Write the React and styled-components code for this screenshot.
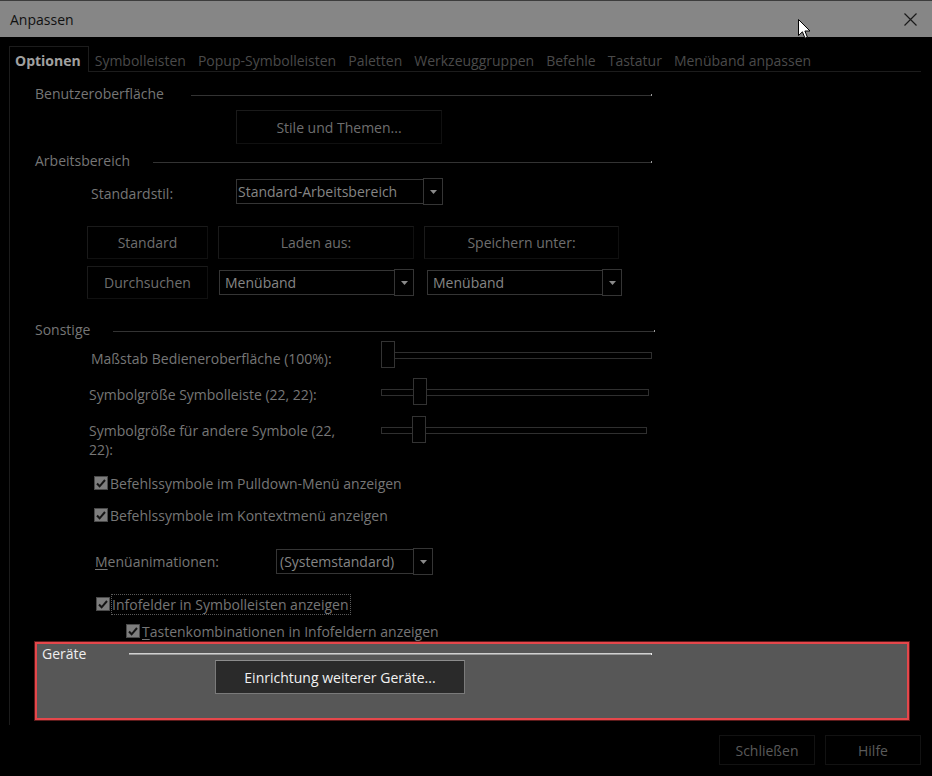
import React from "react";
import styled, { createGlobalStyle } from "styled-components";

const Global = createGlobalStyle`
  html, body { margin: 0; padding: 0; background: #000; }
  * { box-sizing: border-box; }
`;

const Window = styled.div`
  position: relative;
  width: 932px;
  height: 776px;
  overflow: hidden;
  background: #000;
  display: flex;
  flex-direction: column;
  font-family: "Open Sans", "Noto Sans", sans-serif;
  font-size: 14px;
  color: #767676;
`;

const TitleBar = styled.div`
  height: 37px;
  flex: none;
  border-top: 1px solid #3c3c3c;
  background: #868686;
  display: flex;
  align-items: center;
  justify-content: space-between;
  padding: 0 15px 0 10px;
`;

const Title = styled.div`
  color: #111;
  font-size: 14px;
`;

const CloseIcon = styled.svg`
  width: 13px;
  height: 13px;
  display: block;
`;

const Main = styled.div`
  flex: 1;
  display: flex;
  flex-direction: column;
  padding: 9px 11px 0 9px;
`;

const TabStrip = styled.div`
  display: flex;
  align-items: flex-end;
  height: 25px;
`;

const Tab = styled.div`
  height: ${(p) => (p.$active ? "26px" : "25px")};
  display: flex;
  align-items: center;
  padding: ${(p) => (p.$active ? "2px 7px 0 5px" : "3px 6px 0")};
  border: ${(p) => (p.$active ? "1px solid #1c1c1c" : "none")};
  border-bottom: none;
  margin-bottom: ${(p) => (p.$active ? "-1px" : "0")};
  background: #000;
  position: relative;
  z-index: ${(p) => (p.$active ? 1 : 0)};
  font-weight: ${(p) => (p.$active ? 700 : 400)};
  color: ${(p) => (p.$active ? "#a0a0a0" : "#4a4a4a")};
  white-space: nowrap;
`;

const Panel = styled.div`
  border-left: 1px solid #1c1c1c;
  border-top: 1px solid #1c1c1c;
  padding: 12px 12px 5px 25px;
  display: flex;
  flex-direction: column;
  align-items: flex-start;
`;

const SectionHead = styled.div`
  display: grid;
  grid-template-columns: ${(p) => p.$label}px ${(p) => p.$line}px;
  align-items: center;
  height: ${(p) => (p.$compact ? "13px" : "20px")};
  line-height: ${(p) => (p.$compact ? "13px" : "20px")};
  margin-top: ${(p) => p.$top || 0}px;
  color: ${(p) => (p.$bright ? "#efefef" : "#767676")};
  white-space: nowrap;
`;

const Rule = styled.div`
  position: relative;
  height: ${(p) => (p.$bright ? "2px" : "1px")};
  margin-top: ${(p) => (p.$bright ? "1px" : "3px")};
  background: ${(p) => (p.$bright ? "#9a9a9a" : "#333")};
  border-top: ${(p) => (p.$bright ? "1px solid #d0d0d0" : "none")};
  &::after {
    content: "";
    position: absolute;
    right: 0;
    bottom: 0;
    width: 1px;
    height: 2px;
    background: ${(p) => (p.$bright ? "#eee" : "#9a9a9a")};
  }
`;

const DarkButton = styled.div`
  width: ${(p) => p.$w}px;
  height: ${(p) => p.$h}px;
  margin: ${(p) => p.$top || 0}px 0 0 ${(p) => p.$left || 0}px;
  border: 1px solid #101010;
  border-top-color: #1a1a1a;
  border-left-color: #1a1a1a;
  display: flex;
  align-items: center;
  justify-content: center;
  color: #6e6e6e;
  white-space: nowrap;
`;

const FieldRow = styled.div`
  display: grid;
  grid-template-columns: ${(p) => p.$label}px ${(p) => p.$field}px;
  align-items: center;
  margin: ${(p) => p.$top}px 0 0 ${(p) => p.$left}px;
`;

const FieldLabel = styled.div`
  padding-top: ${(p) => p.$drop || 0}px;
  color: #767676;
  white-space: nowrap;
`;

const Key = styled.span`
  text-decoration: underline;
  text-underline-offset: 2px;
`;

const Combo = styled.div`
  display: flex;
  height: 27px;
  align-items: stretch;
  margin-left: ${(p) => p.$shift || 0}px;
`;

const ComboText = styled.div`
  flex: 1;
  margin: 1px 0;
  border: 1px solid #353535;
  border-right: none;
  padding-left: ${(p) => p.$pad || 1}px;
  display: flex;
  align-items: center;
  color: #858585;
  white-space: nowrap;
  overflow: hidden;
`;

const ComboButton = styled.div`
  width: 20px;
  border: 1px solid #353535;
  display: flex;
  align-items: center;
  justify-content: center;
`;

const Caret = styled.svg`
  width: 7px;
  height: 4px;
  display: block;
`;

const ButtonGrid = styled.div`
  display: grid;
  grid-template-columns: 121px 196px 197px;
  grid-auto-rows: 33px;
  column-gap: 10px;
  row-gap: 7px;
  align-items: center;
  margin: 21px 0 0 52px;
`;

const SliderRow = styled.div`
  display: grid;
  grid-template-columns: ${(p) => p.$label}px auto;
  align-items: start;
  margin: ${(p) => p.$top}px 0 0 ${(p) => p.$left}px;
`;

const SliderLabel = styled.div`
  width: 262px;
  padding-top: ${(p) => p.$drop}px;
  line-height: 19px;
  color: #767676;
`;

const SliderTrack = styled.div`
  position: relative;
  width: ${(p) => p.$w}px;
  height: 27px;
  &::before {
    content: "";
    position: absolute;
    left: 0;
    right: 0;
    top: 11px;
    height: 5px;
    border: 1px solid #2f2f2f;
  }
`;

const SliderThumb = styled.div`
  position: absolute;
  top: 0;
  width: 14px;
  height: 27px;
  border: 1px solid #333;
  background: #000;
`;

const CheckRow = styled.div`
  display: flex;
  align-items: center;
  height: 20px;
  gap: 1px;
  margin: ${(p) => p.$top}px 0 0 ${(p) => p.$left}px;
  color: #767676;
  white-space: nowrap;
`;

const Box = styled.div`
  width: 14px;
  height: 14px;
  flex: none;
  background: #7e7e7e;
  border: 1px solid #4a4a4a;
  display: flex;
  align-items: center;
  justify-content: center;
`;

const CheckText = styled.div`
  height: 21px;
  display: flex;
  align-items: center;
  padding: 0 1px 0 0;
  border: 1px dotted ${(p) => (p.$focus ? "#5a5a5a" : "transparent")};
`;

const Highlight = styled.div`
  width: 874px;
  height: 78px;
  margin-top: 1px;
  border: 2px solid #e5474b;
  box-shadow: 0 0 0 1px #5a1a1a;
  background: #575757;
  padding: 3px 0 0 5px;
  display: flex;
  flex-direction: column;
  align-items: flex-start;
`;

const LightButton = styled.div`
  width: 250px;
  height: 34px;
  margin: 0 0 0 173px;
  background: #2a2a2a;
  border: 1px solid #7a7a7a;
  border-top-color: #8c8c8c;
  display: flex;
  align-items: center;
  justify-content: center;
  color: #f2f2f2;
  white-space: nowrap;
`;

const Footer = styled.div`
  display: flex;
  justify-content: flex-end;
  gap: 10px;
  margin-top: 10px;
`;

const FooterButton = styled.div`
  width: 96px;
  height: 30px;
  border: 1px solid #121212;
  display: flex;
  align-items: center;
  justify-content: center;
  color: #5a5a5a;
`;

const Pointer = styled.svg`
  position: absolute;
  left: 798px;
  top: 19px;
  width: 13px;
  height: 21px;
`;

const tabs = [
  "Symbolleisten",
  "Popup-Symbolleisten",
  "Paletten",
  "Werkzeuggruppen",
  "Befehle",
  "Tastatur",
  "Menüband anpassen",
];

const sliders = [
  { label: "Maßstab Bedieneroberfläche (100%):", width: 271, thumb: 0, top: 1, left: 56, drop: 8 },
  { label: "Symbolgröße Symbolleiste (22, 22):", width: 268, thumb: 32, top: 10, left: 54, drop: 7 },
  { label: "Symbolgröße für andere Symbole (22, 22):", width: 266, thumb: 31, top: 11, left: 54, drop: 5 },
];

function DropCaret() {
  return (
    <Caret viewBox="0 0 7 4">
      <path d="M0 0h7L3.5 4z" fill="#8a8a8a" />
    </Caret>
  );
}

function ComboBox({ text, width, shift, pad }) {
  return (
    <Combo style={{ width }} $shift={shift}>
      <ComboText $pad={pad}>{text}</ComboText>
      <ComboButton>
        <DropCaret />
      </ComboButton>
    </Combo>
  );
}

function Check({ children, top, left, focus }) {
  return (
    <CheckRow $top={top} $left={left}>
      <Box>
        <svg width="10" height="9" viewBox="0 0 10 9">
          <path d="M1 4.5l2.6 2.8L9 1" fill="none" stroke="#151515" strokeWidth="2" />
        </svg>
      </Box>
      <CheckText $focus={focus}>{children}</CheckText>
    </CheckRow>
  );
}

export default function App() {
  return (
    <Window>
      <Global />
      <TitleBar>
        <Title>Anpassen</Title>
        <CloseIcon viewBox="0 0 13 13">
          <path d="M0.5 0.5l12 12M12.5 0.5l-12 12" stroke="#1a1a1a" strokeWidth="1.2" />
        </CloseIcon>
      </TitleBar>

      <Main>
        <TabStrip>
          <Tab $active>Optionen</Tab>
          {tabs.map((t) => (
            <Tab key={t}>{t}</Tab>
          ))}
        </TabStrip>

        <Panel>
          <SectionHead $label={156} $line={461}>
            <span>Benutzeroberfläche</span>
            <Rule />
          </SectionHead>
          <DarkButton $w={206} $h={34} $top={6} $left={201}>
            Stile und Themen...
          </DarkButton>

          <SectionHead $label={118} $line={499} $top={7}>
            <span>Arbeitsbereich</span>
            <Rule />
          </SectionHead>
          <FieldRow $label={145} $field={207} $top={7} $left={56}>
            <FieldLabel $drop={3}>Standardstil:</FieldLabel>
            <ComboBox text="Standard-Arbeitsbereich" width={207} />
          </FieldRow>

          <ButtonGrid>
            <DarkButton $w={121} $h={33}>Standard</DarkButton>
            <DarkButton $w={196} $h={33}>Laden aus:</DarkButton>
            <DarkButton $w={195} $h={33}>Speichern unter:</DarkButton>
            <DarkButton $w={121} $h={33}>Durchsuchen</DarkButton>
            <ComboBox text="Menüband" width={195} shift={1} pad={5} />
            <ComboBox text="Menüband" width={195} shift={3} pad={5} />
          </ButtonGrid>

          <SectionHead $label={78} $line={542} $top={21}>
            <span>Sonstige</span>
            <Rule />
          </SectionHead>

          {sliders.map((s) => (
            <SliderRow key={s.label} $label={346 - s.left} $top={s.top} $left={s.left}>
              <SliderLabel $drop={s.drop}>{s.label}</SliderLabel>
              <SliderTrack $w={s.width}>
                <SliderThumb style={{ left: s.thumb }} />
              </SliderTrack>
            </SliderRow>
          ))}

          <Check top={14} left={59}>Befehlssymbole im Pulldown-Menü anzeigen</Check>
          <Check top={12} left={59}>Befehlssymbole im Kontextmenü anzeigen</Check>

          <FieldRow $label={181} $field={157} $top={23} $left={60}>
            <FieldLabel>
              <Key>M</Key>enüanimationen:
            </FieldLabel>
            <ComboBox text="(Systemstandard)" width={157} pad={3} />
          </FieldRow>

          <Check top={19} left={61} focus>
            Infofelder in Symbolleisten anzeigen
          </Check>
          <Check top={7} left={91}>
            <span>
              <Key>T</Key>astenkombinationen in Infofeldern anzeigen
            </span>
          </Check>

          <Highlight>
            <SectionHead $label={87} $line={523} $bright $compact>
              <span>Geräte</span>
              <Rule $bright />
            </SectionHead>
            <LightButton>Einrichtung weiterer Geräte...</LightButton>
          </Highlight>
        </Panel>

        <Footer>
          <FooterButton>Schließen</FooterButton>
          <FooterButton>Hilfe</FooterButton>
        </Footer>
      </Main>

      <Pointer viewBox="0 0 13 21">
        <path
          d="M0.5 0.5V16.5L4.4 12.8L7 19.2L9.4 18.2L6.9 12H12Z"
          fill="#fff"
          stroke="#000"
          strokeWidth="1"
          strokeLinejoin="round"
        />
      </Pointer>
    </Window>
  );
}
